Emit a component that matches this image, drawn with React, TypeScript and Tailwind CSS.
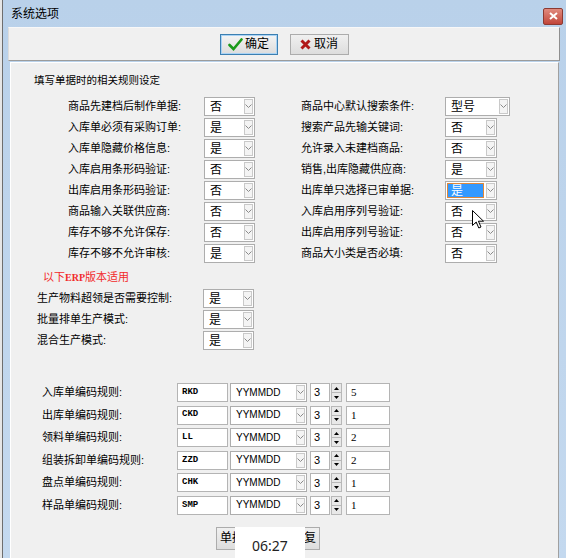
import React from "react";

type SelProps = { v: string; w: string; focus?: boolean; ts?: string };

function Chevron() {
    return (
        <svg width="7" height="5" viewBox="0 0 7 5" className="mb-[4px]">
            <path d="M0.5 0.5 L3.5 3.5 L6.5 0.5" fill="none" stroke="#8a8a8a" strokeWidth="1" />
        </svg>
    );
}

function Sel({ v, w, focus, ts = "text-[12px]" }: SelProps) {
    return (
        <div className={`flex h-[19px] border border-[#adadad] bg-white ${w}`}>
            {focus ? (
                <div className="flex flex-1 items-center py-[1px] pl-[1px] pr-[2px]">
                    <div className="flex h-full w-full items-center border border-[#e0883a] bg-[#3399ff] pl-[3px] text-[12px] leading-none text-white">
                        {v}
                    </div>
                </div>
            ) : (
                <div className={`flex flex-1 items-center pl-[5px] leading-none ${ts}`}>{v}</div>
            )}
            <div className="my-[1px] mr-[1px] flex w-[9px] items-end justify-center border border-[#c9c9c9] bg-[#f4f4f4]">
                <Chevron />
            </div>
        </div>
    );
}

function Row({ label, v, lw, sw = "w-[51px]", focus }: { label: string; v: string; lw: string; sw?: string; focus?: boolean }) {
    return (
        <div className="flex h-[19px] items-center">
            <div className={`shrink-0 text-[11px] leading-none ${lw}`}>{label}:</div>
            <Sel v={v} w={sw} focus={focus} />
        </div>
    );
}

const leftRows = [
    ["商品先建档后制作单据", "否"],
    ["入库单必须有采购订单", "是"],
    ["入库单隐藏价格信息", "是"],
    ["入库启用条形码验证", "否"],
    ["出库启用条形码验证", "否"],
    ["商品输入关联供应商", "否"],
    ["库存不够不允许保存", "否"],
    ["库存不够不允许审核", "是"],
];

const rightRows = [
    ["商品中心默认搜索条件", "型号"],
    ["搜索产品先输关键词", "否"],
    ["允许录入未建档商品", "否"],
    ["销售,出库隐藏供应商", "是"],
    ["出库单只选择已审单据", "是"],
    ["入库启用序列号验证", "否"],
    ["出库启用序列号验证", "否"],
    ["商品大小类是否必填", "否"],
];

const erpRows = [
    ["生产物料超领是否需要控制", "是"],
    ["批量排单生产模式", "是"],
    ["混合生产模式", "是"],
];

const codeRows = [
    ["入库单编码规则", "RKD", "5"],
    ["出库单编码规则", "CKD", "1"],
    ["领料单编码规则", "LL", "2"],
    ["组装拆卸单编码规则", "ZZD", "2"],
    ["盘点单编码规则", "CHK", "1"],
    ["样品单编码规则", "SMP", "1"],
];

function Spinner() {
    return (
        <div className="flex h-[19px] w-[11px] flex-col border border-[#b8b8b8] bg-[#e8e8e8]">
            <div className="flex flex-1 items-center justify-center border-b border-[#b8b8b8]">
                <svg width="5" height="3" viewBox="0 0 5 3">
                    <path d="M0 3 L2.5 0 L5 3 Z" fill="#000" />
                </svg>
            </div>
            <div className="flex flex-1 items-center justify-center">
                <svg width="5" height="3" viewBox="0 0 5 3">
                    <path d="M0 0 L2.5 3 L5 0 Z" fill="#000" />
                </svg>
            </div>
        </div>
    );
}

export default function App(): React.ReactElement {
    return (
        <div className="relative flex h-[558px] w-[566px] overflow-hidden bg-[#bed3ec] font-['Liberation_Sans','Noto_Sans_CJK_SC',sans-serif] text-black">
            <div className="w-[3px] border-r border-[#6e6e6e] bg-[#e6e6e6]" />
            <div className="flex flex-1 flex-col bg-gradient-to-b from-[#b9d1ea] to-[#c4d9ef]">
                {/* title bar */}
                <div className="flex h-[27px] shrink-0 items-center justify-between pl-[8px] pr-[3px]">
                    <span className="text-[12px] leading-none">系统选项</span>
                    <div className="mt-[5px] flex h-[17px] w-[20px] items-center justify-center rounded-[2px] border border-[#8c3a32] bg-gradient-to-b from-[#e08a7e] to-[#c1453a]">
                        <svg width="9" height="8" viewBox="0 0 9 8">
                            <path d="M1 1 L8 7 M8 1 L1 7" stroke="#fff" strokeWidth="2" />
                        </svg>
                    </div>
                </div>

                <div className="flex flex-1 flex-col pl-[5px] pr-[6px]">
                    {/* toolbar */}
                    <div className="flex h-[34px] shrink-0 items-center justify-center gap-[12px] border border-b-[#9c9c9c] border-l-[#dcdcdc] border-r-[#8e8e8e] border-t-[#f8f8f8] bg-[#f0f0f0]">
                        <button className="flex h-[21px] w-[58px] items-center justify-center gap-[2px] border border-[#3c7fb1] bg-gradient-to-b from-[#f4f4f4] to-[#dcdcdc] text-[12px] shadow-[inset_0_0_0_1px_#a9d3f5]">
                            <svg width="15" height="13" viewBox="0 0 15 13">
                                <path d="M1.5 7 L5.5 11 L13.5 1.5" fill="none" stroke="#1a9a1a" strokeWidth="2.6" strokeLinecap="round" />
                            </svg>
                            确定
                        </button>
                        <button className="flex h-[21px] w-[59px] items-center justify-center gap-[3px] border border-[#acacac] bg-gradient-to-b from-[#f0f0f0] to-[#dddddd] text-[12px]">
                            <svg width="11" height="11" viewBox="0 0 11 11">
                                <path d="M1.5 1.5 L9.5 9.5 M9.5 1.5 L1.5 9.5" stroke="#b01818" strokeWidth="3" />
                            </svg>
                            取消
                        </button>
                    </div>

                    {/* main panel */}
                    <div className="ml-[2px] mr-[1px] mt-[1px] flex flex-1 flex-col border border-b-0 border-l-[#ffffff] border-r-[#a0a0a0] border-t-[#ffffff] bg-[#f0f0f0]">
                        <div className="ml-[23px] mt-[11px] text-[10.5px] leading-[13px]">填写单据时的相关规则设定</div>

                        <div className="mt-[10px] flex">
                            <div className="ml-[57px] flex w-[187px] flex-col gap-[2px]">
                                {leftRows.map(([l, v]) => (
                                    <Row key={l} label={l} v={v} lw="w-[136px]" />
                                ))}
                            </div>
                            <div className="ml-[46px] flex flex-col gap-[2px]">
                                {rightRows.map(([l, v], i) => (
                                    <Row
                                        key={l}
                                        label={l}
                                        v={v}
                                        lw="w-[144px]"
                                        sw={i === 0 ? "w-[65px]" : "w-[52px]"}
                                        focus={i === 4}
                                    />
                                ))}
                            </div>
                        </div>

                        <div className="ml-[32px] mt-[8px] text-[11px] leading-[13px] text-[#f22b2b]">
                            以下<span className="font-['Liberation_Serif'] text-[10px] font-bold">ERP</span>版本适用
                        </div>

                        <div className="ml-[26px] mt-[5px] flex flex-col gap-[2px]">
                            {erpRows.map(([l, v]) => (
                                <Row key={l} label={l} v={v} lw="w-[166px]" />
                            ))}
                        </div>

                        <div className="ml-[31px] mt-[33px] flex flex-col gap-[3.6px]">
                            {codeRows.map(([l, p, n]) => (
                                <div key={l} className="flex h-[19px] items-center">
                                    <div className="w-[135px] shrink-0 text-[11px] leading-none">{l}:</div>
                                    <div className="flex h-[19px] w-[51px] items-center border border-[#b4b4b4] bg-white pl-[4px] font-['Liberation_Mono'] text-[9px] font-bold">
                                        {p}
                                    </div>
                                    <div className="ml-[2px]">
                                        <Sel v="YYMMDD" w="w-[77px]" ts="text-[10px]" />
                                    </div>
                                    <div className="ml-[3px] flex h-[19px] w-[20px] items-center border border-[#b4b4b4] bg-white pl-[3px] text-[11px]">
                                        3
                                    </div>
                                    <div className="ml-[1px]">
                                        <Spinner />
                                    </div>
                                    <div className="ml-[4px] flex h-[19px] w-[44px] items-center border border-[#b4b4b4] bg-white pl-[4px] font-['Liberation_Serif'] text-[11px]">
                                        {n}
                                    </div>
                                </div>
                            ))}
                        </div>

                        <div className="ml-[205px] mt-[12px]">
                            <button className="flex h-[23px] w-[104px] items-center justify-center border border-[#acacac] bg-gradient-to-b from-[#f0f0f0] to-[#dddddd] px-[2px] text-[12px]">
                                单据编码规则恢复
                            </button>
                        </div>
                    </div>
                </div>
            </div>

            {/* clock tooltip overlay */}
            <div className="absolute left-[235px] top-[527px] flex h-[31px] w-[70px] items-end justify-center bg-white pb-[5px] font-['Noto_Sans',sans-serif] text-[14px] leading-none text-[#222]">
                06:27
            </div>

            {/* mouse cursor */}
            <svg className="absolute left-[472px] top-[210px]" width="13" height="19" viewBox="0 0 13 19">
                <path d="M0.5 0.5 L0.5 15.5 L4.2 12 L6.8 18 L9 17 L6.4 11.2 L11.5 11.2 Z" fill="#fff" stroke="#000" strokeWidth="1" />
            </svg>
        </div>
    );
}
